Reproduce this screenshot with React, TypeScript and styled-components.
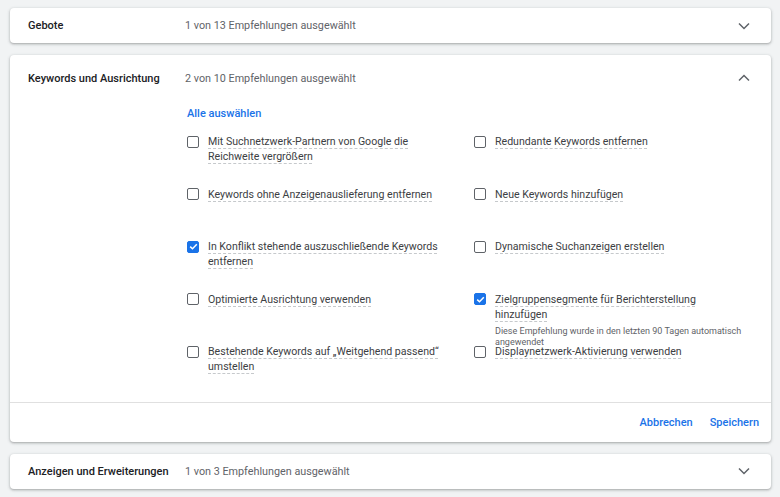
import styled, { createGlobalStyle } from "styled-components"

const GlobalStyle = createGlobalStyle`
body {
  margin: 0;
  background: #f1f3f4;
  font-family: Roboto, "Liberation Sans", sans-serif;
}
`

const Page = styled.div`
display: flex;
flex-direction: column;
gap: 12px;
padding: 8px 9px 10px 10px;
`

const Card = styled.div`
background: #fff;
border-radius: 4px;
box-shadow: 0 1px 2px rgba(60, 64, 67, 0.3), 0 1px 3px 1px rgba(60, 64, 67, 0.12);
`

const Header = styled.div<{ $open?: boolean }>`
display: flex;
align-items: center;
height: ${(p) => (p.$open ? "46px" : "35px")};
padding: 0 20px 0 18px;
`

const Title = styled.div`
width: 157px;
font-size: 11px;
font-weight: 500;
color: #202124;
`

const Summary = styled.div`
flex: 1;
font-size: 10.8px;
color: #5f6368;
`

const Chevron = styled.svg`
width: 14px;
height: 14px;
`

const Body = styled.div`
padding: 5px 20px 5px 177px;
`

const SelectAll = styled.div`
font-size: 11px;
line-height: 16px;
font-weight: 500;
color: #1a73e8;
margin-bottom: 12px;
`

const Grid = styled.div`
display: grid;
grid-template-columns: 287px 1fr;
grid-auto-rows: 52.5px;
`

const Option = styled.div`
display: flex;
align-items: flex-start;
gap: 9px;
`

const Box = styled.div<{ $checked?: boolean }>`
flex: none;
box-sizing: border-box;
width: 12px;
height: 12px;
margin-top: 1.5px;
border-radius: 2px;
border: 1.5px solid ${(p) => (p.$checked ? "#1a73e8" : "#5f6368")};
background: ${(p) => (p.$checked ? "#1a73e8" : "#fff")};
display: flex;
align-items: center;
justify-content: center;
`

const LabelCol = styled.div`
width: 250px;
`

const Label = styled.div`
font-size: 10.6px;
line-height: 15px;
color: #3c4043;
span {
  text-decoration: underline dashed #c6c9cc;
  text-decoration-thickness: 1px;
  text-underline-offset: 3px;
}
`

const Note = styled.div`
margin-top: 4px;
font-size: 9px;
line-height: 11px;
color: #5f6368;
`

const Footer = styled.div`
display: flex;
justify-content: flex-end;
align-items: center;
gap: 17px;
height: 39px;
padding: 0 12px;
border-top: 1px solid #e0e0e0;
`

const TextButton = styled.div`
font-size: 11px;
font-weight: 500;
color: #1a73e8;
`

const ChevronIcon = ({ up }: { up?: boolean }) => (
  <Chevron viewBox="0 0 14 14">
    <path
      d={up ? "M2 9.5 L7 4.5 L12 9.5" : "M2 4.5 L7 9.5 L12 4.5"}
      fill="none"
      stroke="#5f6368"
      strokeWidth="1.5"
    />
  </Chevron>
)

type Item = { label: string; checked?: boolean; note?: string }

const items: Item[] = [
  { label: "Mit Suchnetzwerk-Partnern von Google die Reichweite vergrößern" },
  { label: "Redundante Keywords entfernen" },
  { label: "Keywords ohne Anzeigenauslieferung entfernen" },
  { label: "Neue Keywords hinzufügen" },
  { label: "In Konflikt stehende auszuschließende Keywords entfernen", checked: true },
  { label: "Dynamische Suchanzeigen erstellen" },
  { label: "Optimierte Ausrichtung verwenden" },
  {
    label: "Zielgruppensegmente für Berichterstellung hinzufügen",
    checked: true,
    note: "Diese Empfehlung wurde in den letzten 90 Tagen automatisch angewendet",
  },
  { label: "Bestehende Keywords auf „Weitgehend passend“ umstellen" },
  { label: "Displaynetzwerk-Aktivierung verwenden" },
]

const App = () => {
  return (
    <>
      <GlobalStyle />
      <Page>
        <Card>
          <Header>
            <Title>Gebote</Title>
            <Summary>1 von 13 Empfehlungen ausgewählt</Summary>
            <ChevronIcon />
          </Header>
        </Card>
        <Card>
          <Header $open>
            <Title>Keywords und Ausrichtung</Title>
            <Summary>2 von 10 Empfehlungen ausgewählt</Summary>
            <ChevronIcon up />
          </Header>
          <Body>
            <SelectAll>Alle auswählen</SelectAll>
            <Grid>
              {items.map((it) => (
                <Option key={it.label}>
                  <Box $checked={it.checked}>
                    {it.checked && (
                      <svg width="9" height="9" viewBox="0 0 9 9">
                        <path d="M1.2 4.6 L3.5 6.8 L7.8 2.2" fill="none" stroke="#fff" strokeWidth="1.5" />
                      </svg>
                    )}
                  </Box>
                  <LabelCol>
                    <Label>
                      <span>{it.label}</span>
                    </Label>
                    {it.note && <Note>{it.note}</Note>}
                  </LabelCol>
                </Option>
              ))}
            </Grid>
          </Body>
          <Footer>
            <TextButton>Abbrechen</TextButton>
            <TextButton>Speichern</TextButton>
          </Footer>
        </Card>
        <Card>
          <Header>
            <Title>Anzeigen und Erweiterungen</Title>
            <Summary>1 von 3 Empfehlungen ausgewählt</Summary>
            <ChevronIcon />
          </Header>
        </Card>
      </Page>
    </>
  )
}

export default App
